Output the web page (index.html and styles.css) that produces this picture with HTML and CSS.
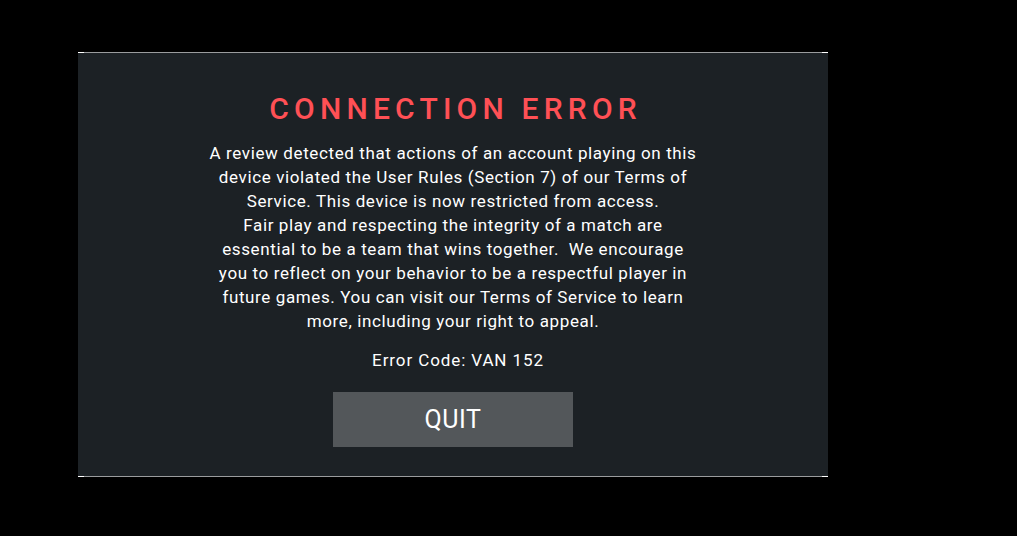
FILE: index.html
```html
<!DOCTYPE html>
<html lang="en">
<head>
<meta charset="utf-8">
<title>Connection Error</title>
<link rel="stylesheet" href="styles.css">
</head>
<body>
<div class="stage">
  <section class="dialog">
    <span class="corner tl"></span><span class="corner tr"></span>
    <span class="corner bl"></span><span class="corner br"></span>
    <h1 class="title">CONNECTION ERROR</h1>
    <div class="message">
      <p>A review detected that actions of an account playing on this<br>device violated the User Rules (Section 7) of our Terms of<br>Service. This device is now restricted from access.</p>
      <p>Fair play and respecting the integrity of a match are<br>essential to be a team that wins together.&nbsp; We encourage<br>you to reflect on your behavior to be a respectful player in<br>future games. You can visit our Terms of Service to learn<br>more, including your right to appeal.</p>
    </div>
    <p class="code">Error Code: VAN 152</p>
    <button class="quit">QUIT</button>
  </section>
</div>
</body>
</html>
```
FILE: styles.css
```css
html, body {
  margin: 0;
  background: #000;
  height: 100%;
}
body {
  font-family: Roboto, "DejaVu Sans", sans-serif;
  color: #fff;
}
.stage {
  padding: 52px 0 0 78px;
}
.dialog {
  position: relative;
  width: 750px;
  height: 425px;
  box-sizing: border-box;
  background: #1c2125;
  border-top: 1px solid #9a9c9e;
  border-bottom: 1px solid #9a9c9e;
  display: flex;
  flex-direction: column;
  align-items: center;
  padding-top: 38px;
}
.corner {
  position: absolute;
  width: 6px;
  height: 1px;
  background: #fff;
}
.tl { top: -1px; left: 0; }
.tr { top: -1px; right: 0; }
.bl { bottom: -1px; left: 0; }
.br { bottom: -1px; right: 0; }
.title {
  margin: 0;
  font-size: 30px;
  font-weight: 500;
  letter-spacing: 5.2px;
  padding-left: 5.2px;
  color: #ff5055;
  line-height: 36px;
}
.message {
  text-align: center;
  font-size: 17px;
  line-height: 24px;
  letter-spacing: 0.62px;
  margin-top: 14px;
  white-space: nowrap;
}
.message p {
  margin: 0;
}
.code {
  margin: 15px 0 0;
  padding-left: 10px;
  font-size: 17px;
  line-height: 24px;
  letter-spacing: 0.9px;
}
.quit {
  margin-top: 20px;
  width: 240px;
  height: 55px;
  border: none;
  background: #53575a;
  color: #fff;
  font-family: Roboto, "DejaVu Sans", sans-serif;
  font-size: 25px;
  letter-spacing: 0.5px;
  padding: 0;
}
```
